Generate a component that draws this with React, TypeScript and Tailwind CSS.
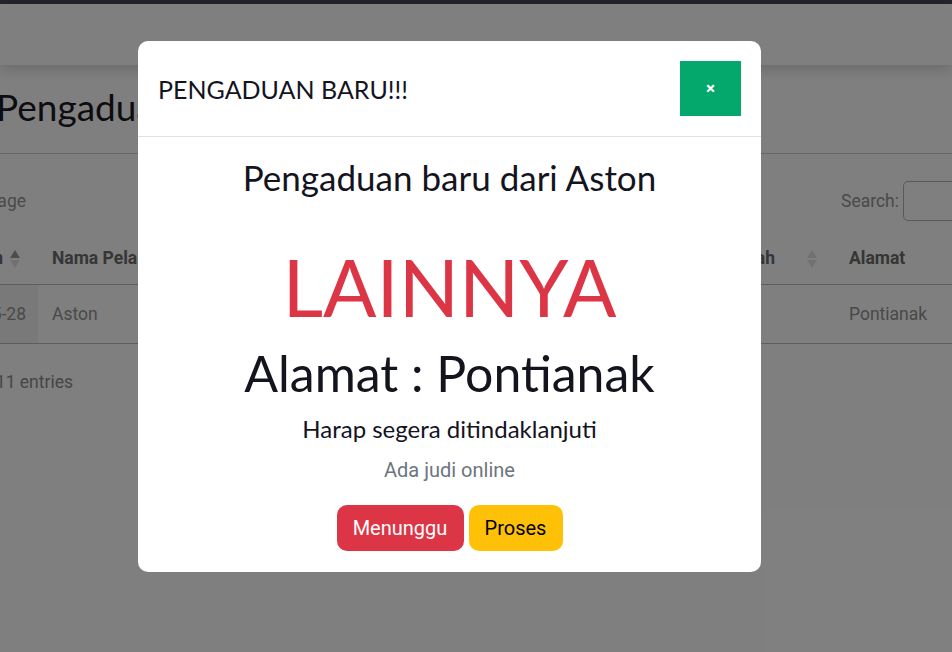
import React from "react";

const jost = { fontFamily: "Lato, 'Noto Sans', sans-serif" } as const;

function SortArrows({ active }: { active?: boolean }) {
  return (
    <span className="absolute right-[18px] top-1/2 -translate-y-1/2 flex flex-col items-center gap-[2px]">
      <svg width="10" height="8" viewBox="0 0 10 8">
        <path d="M5 0 L10 8 L0 8 Z" fill={active ? "#9a9a9a" : "#e2e2e2"} />
      </svg>
      <svg width="10" height="8" viewBox="0 0 10 8">
        <path d="M0 0 L10 0 L5 8 Z" fill="#e2e2e2" />
      </svg>
    </span>
  );
}

export default function App() {
  return (
    <div
      className="relative w-[952px] h-[652px] overflow-hidden bg-white"
      style={{ fontFamily: "Roboto, 'Liberation Sans', sans-serif" }}
    >
      {/* page behind the modal */}
      <div className="h-[4px] bg-[#4a4858]" />
      <div className="h-[61px] bg-white shadow-[0_4px_14px_rgba(0,0,0,0.18)] relative z-10" />
      <div className="-ml-[110px] w-[1213px]">
        <h1
          className="ml-[106px] mt-[22px] text-[37px] leading-[40px] font-normal text-[#1a1a22]"
          style={jost}
        >
          Pengaduan
        </h1>
        <div className="mt-[26px] h-px bg-[#cccccc]" />
        <div className="mt-[27px] h-[40px] flex items-center justify-between">
          <div className="w-[136px] flex justify-end whitespace-nowrap text-[17.5px] text-[#949494]">
            <span>Show 10 entries per page</span>
          </div>
          <div className="flex items-center gap-[4px]">
            <span className="text-[17.5px] text-[#949494]">Search:</span>
            <div className="w-[200px] h-[40px] rounded-[5px] border border-[#b4b4b4]" />
          </div>
        </div>
        {/* table */}
        <div className="mt-[12px]">
          <div className="grid grid-cols-[148px_212px_250px_335px_268px] h-[52px] items-center border-b border-[#bbbbbb] text-[17.5px] font-bold text-[#6c6c6c]">
            <div className="relative h-full flex items-center justify-end pr-[35px] whitespace-nowrap">
              Tanggal Aduan
              <SortArrows active />
            </div>
            <div className="pl-[14px] whitespace-nowrap">Nama Pelapor</div>
            <div className="pl-[14px] whitespace-nowrap">Kategori</div>
            <div className="relative h-full flex items-center justify-end pr-[60px] whitespace-nowrap">
              Jenis Masalah
              <SortArrows />
            </div>
            <div className="pl-[14px] whitespace-nowrap">Alamat</div>
          </div>
          <div className="grid grid-cols-[148px_212px_250px_335px_268px] h-[59px] items-center border-b border-[#bbbbbb] text-[17.5px] text-[#929292]">
            <div className="h-full flex items-center justify-end pr-[12px] bg-[#f3f3f3]">
              2024-05-28
            </div>
            <div className="pl-[14px]">Aston</div>
            <div className="pl-[14px]">Lainnya</div>
            <div className="pl-[14px]">Ada judi online</div>
            <div className="pl-[14px]">Pontianak</div>
          </div>
        </div>
        <div className="mt-[25px] w-[183px] flex justify-end whitespace-nowrap text-[17.5px] text-[#8c8c8c]">
          <span>Showing 1 to 1 of 11 entries</span>
        </div>
      </div>

      {/* backdrop */}
      <div className="absolute inset-0 bg-black/50 z-20" />

      {/* modal */}
      <div className="absolute left-[138px] top-[41px] w-[623px] h-[531px] bg-white rounded-[10px] z-30 flex flex-col">
        <div className="flex items-center justify-between p-[20px] border-b border-[#dee2e6]">
          <h5 className="text-[25px] leading-[30px] text-[#14141f]" style={jost}>
            PENGADUAN BARU!!!
          </h5>
          <button className="w-[61px] h-[55px] bg-[#05a86c] text-white text-[17px] font-bold flex items-center justify-center">
            ×
          </button>
        </div>
        <div className="flex flex-col items-center text-center">
          <div
            className="mt-[17px] h-[46px] leading-[46px] text-[35px] text-[#14141f]"
            style={jost}
          >
            Pengaduan baru dari Aston
          </div>
          <div
            className="mt-[39px] h-[96px] leading-[96px] text-[79px] text-[#dc3545]"
            style={jost}
          >
            LAINNYA
          </div>
          <div
            className="mt-[6px] h-[64px] leading-[64px] text-[50px] text-[#14141f]"
            style={jost}
          >
            Alamat : Pontianak
          </div>
          <div
            className="mt-[8px] h-[32px] leading-[32px] text-[24px] text-[#14141f]"
            style={jost}
          >
            Harap segera ditindaklanjuti
          </div>
          <div className="mt-[11px] h-[28px] leading-[28px] text-[20px] text-[#6c757d]">
            Ada judi online
          </div>
          <div className="mt-[21px] flex gap-[5px]">
            <button className="w-[127px] h-[46px] rounded-[10px] bg-[#dc3545] text-white text-[20px]">
              Menunggu
            </button>
            <button className="w-[94px] h-[46px] rounded-[10px] bg-[#ffc107] text-black text-[20px]">
              Proses
            </button>
          </div>
        </div>
      </div>
    </div>
  );
}
